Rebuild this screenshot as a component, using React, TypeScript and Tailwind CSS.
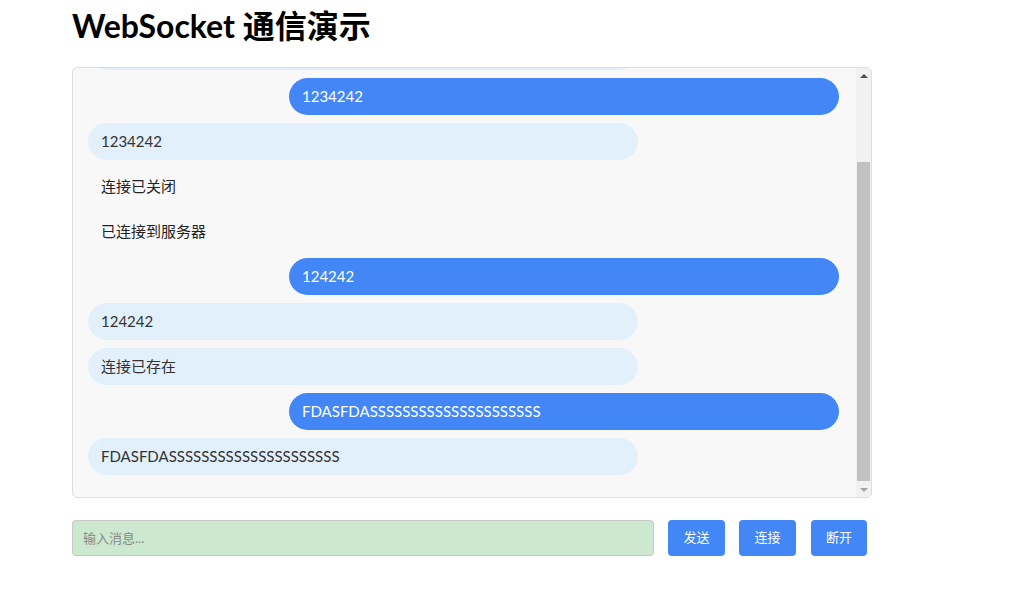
import { useEffect, useRef } from 'react';

type Msg = { kind: 'sent' | 'received' | 'system'; text: string };

const messages: Msg[] = [
  { kind: 'system', text: '已连接到服务器' },
  { kind: 'received', text: '连接已存在' },
  { kind: 'sent', text: '1234242' },
  { kind: 'received', text: '1234242' },
  { kind: 'system', text: '连接已关闭' },
  { kind: 'system', text: '已连接到服务器' },
  { kind: 'sent', text: '124242' },
  { kind: 'received', text: '124242' },
  { kind: 'received', text: '连接已存在' },
  { kind: 'sent', text: 'FDASFDASSSSSSSSSSSSSSSSSSSSS' },
  { kind: 'received', text: 'FDASFDASSSSSSSSSSSSSSSSSSSSS' },
];

export default function App() {
  const listRef = useRef<HTMLDivElement>(null);

  useEffect(() => {
    const el = listRef.current;
    if (el) el.scrollTop = el.scrollHeight;
  }, []);

  return (
    <div
      className="min-h-[593px] bg-white px-[72px] pt-[6px]"
      style={{ fontFamily: 'Lato, "Noto Sans CJK SC", sans-serif' }}
    >
      <h1 className="text-[32px] leading-[40px] font-bold text-black mb-[21px]">
        WebSocket 通信演示
      </h1>

      {/* Message box with classic scrollbar */}
      <div className="w-[800px] h-[431px] flex overflow-hidden rounded-[5px] border border-[#dddddd] bg-[#f8f8f8]">
        <div ref={listRef} className="flex-1 overflow-hidden pl-[15px] pr-[17px] pt-[15px] pb-[14px]">
          {messages.map((m, i) => (
            <div
              key={i}
              className={
                m.kind === 'sent'
                  ? 'ml-auto mb-[8px] w-[550px] h-[37px] rounded-full bg-[#4287f5] px-[13px] flex items-center text-[15px] text-white'
                  : m.kind === 'received'
                    ? 'mb-[8px] w-[550px] h-[37px] rounded-full bg-[#e2f0fc] px-[13px] flex items-center text-[15px] text-[#333333]'
                    : 'mb-[8px] w-[550px] h-[37px] px-[13px] flex items-center text-[15px] text-[#222222]'
              }
            >
              {m.text}
            </div>
          ))}
        </div>

        <div className="w-[15px] flex flex-col bg-[#f1f1f1]">
          <div className="h-[15px] flex items-center justify-center">
            <div className="w-0 h-0 border-x-[4px] border-x-transparent border-b-[4px] border-b-[#505050]" />
          </div>
          <div className="flex-1 flex flex-col justify-end pb-[1px]">
            <div className="mx-[1px] h-[319px] bg-[#c1c1c1]" />
          </div>
          <div className="h-[15px] flex items-center justify-center">
            <div className="w-0 h-0 border-x-[4px] border-x-transparent border-t-[4px] border-t-[#a3a3a3]" />
          </div>
        </div>
      </div>

      {/* Input row */}
      <div className="mt-[22px] flex items-center">
        <input
          type="text"
          placeholder="输入消息..."
          className="w-[582px] h-[36px] rounded-[4px] border border-[#c8c8c8] bg-[#cce8cf] px-[10px] text-[13px] text-[#333333] placeholder:text-[#8a8a8a] outline-none"
        />
        <button className="ml-[14px] w-[57px] h-[36px] rounded-[4px] bg-[#4287f5] text-white text-[13px]">
          发送
        </button>
        <button className="ml-[14px] w-[57px] h-[36px] rounded-[4px] bg-[#4287f5] text-white text-[13px]">
          连接
        </button>
        <button className="ml-[15px] w-[56px] h-[36px] rounded-[4px] bg-[#4287f5] text-white text-[13px]">
          断开
        </button>
      </div>
    </div>
  );
}
